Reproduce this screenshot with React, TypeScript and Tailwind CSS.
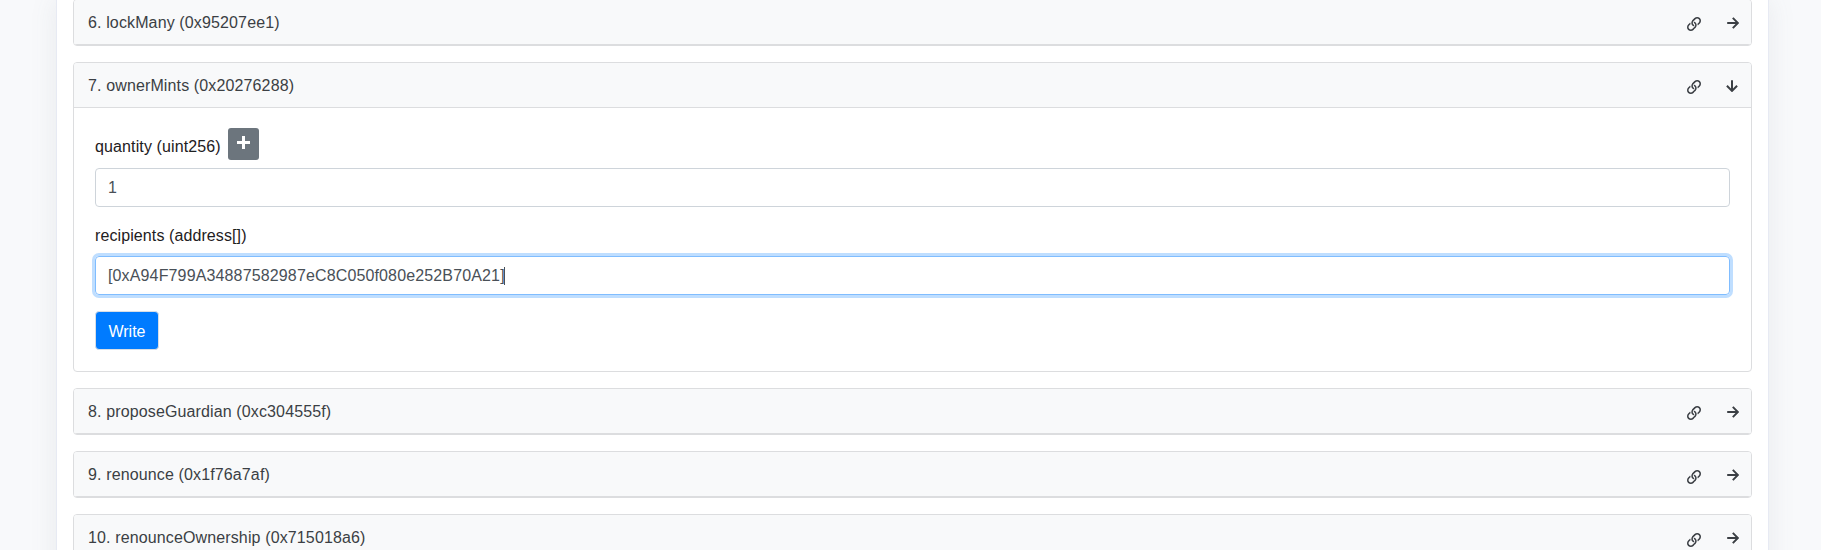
import React from "react";

const LINK_PATH =
  "M314.222 197.78c51.091 51.091 54.377 132.287 9.75 187.16-6.242 7.73-2.784 3.865-84.94 86.02-54.696 54.696-143.266 54.745-197.99 0-54.711-54.69-54.734-143.255 0-197.99 32.773-32.773 51.835-51.899 63.409-63.457 7.463-7.452 20.331-2.354 20.486 8.192a173.31 173.31 0 0 0 4.746 37.828c.966 4.029-.272 8.269-3.202 11.198L80.632 312.57c-32.755 32.775-32.887 85.892 0 118.8 32.775 32.755 85.892 32.887 118.8 0l75.19-75.2c32.718-32.725 32.777-86.013 0-118.79a83.722 83.722 0 0 0-22.814-16.229c-4.623-2.233-7.182-7.25-6.561-12.346 1.356-11.122 6.296-21.885 14.815-30.405l4.375-4.375c3.625-3.626 9.177-4.594 13.76-2.294 12.999 6.524 25.187 15.211 36.025 26.049zM470.958 41.04c-54.724-54.745-143.294-54.696-197.99 0-82.156 82.156-78.698 78.29-84.94 86.02-44.627 54.873-41.341 136.069 9.75 187.16 10.838 10.838 23.026 19.525 36.025 26.049 4.582 2.3 10.134 1.331 13.76-2.294l4.375-4.375c8.52-8.519 13.459-19.283 14.815-30.405.621-5.096-1.938-10.113-6.561-12.346a83.706 83.706 0 0 1-22.814-16.229c-32.777-32.777-32.718-86.065 0-118.79l75.19-75.2c32.908-32.887 86.025-32.755 118.8 0 32.887 32.908 32.755 86.025 0 118.8l-45.848 45.84c-2.93 2.929-4.168 7.169-3.202 11.198a173.31 173.31 0 0 1 4.746 37.828c.155 10.546 13.023 15.644 20.486 8.192 11.574-11.558 30.636-30.684 63.409-63.457 54.733-54.735 54.71-143.3-.001-197.991z";

function LinkIcon({ className }: { className: string }) {
  return (
    <svg viewBox="0 0 512 512" className={`size-3.5 ${className}`} fill="currentColor">
      <path d={LINK_PATH} />
    </svg>
  );
}

function ArrowIcon({ down }: { down?: boolean }) {
  return (
    <svg
      viewBox="0 0 12 12"
      className={down ? "mr-[13px] size-3 rotate-90" : "mr-3 size-3"}
      fill="none"
      stroke="currentColor"
      strokeWidth="2"
    >
      <path d="M0.2 6H11M5.8 0.9L10.9 6L5.8 11.1" />
    </svg>
  );
}

type HeaderProps = { title: string; open?: boolean; low?: boolean };

function Header({ title, open, low }: HeaderProps) {
  return (
    <div className="flex h-[45px] items-center border-b border-[#dcdddf] bg-[#f8f9fa] pt-px pl-3.5 text-[#3b3f44]">
      <span className="grow whitespace-nowrap tracking-[0.13px]">{title}</span>
      <LinkIcon className={`${low ? "mt-1" : "mt-[3px]"} ${open ? "mr-[25px]" : "mr-[26px]"}`} />
      <ArrowIcon down={open} />
    </div>
  );
}

function Card({ children, ...header }: HeaderProps & { children?: React.ReactNode }) {
  return (
    <section
      className={`shrink-0 overflow-hidden rounded border border-[#dcdddf] ${header.open ? "h-[310px]" : "h-[47px]"}`}
    >
      <Header {...header} />
      {children}
    </section>
  );
}

export default function App() {
  return (
    <div className="h-[550px] overflow-hidden bg-[#f8f9fb] pr-[52px] pl-14 font-['Liberation_Sans',Arial,sans-serif] text-base leading-6 text-[#1e2022]">
      <main className="-mt-px flex h-[600px] flex-col gap-4 border-x border-[#e7eaf3] bg-white px-4 shadow-[0_0_26px_rgba(100,105,115,0.1)]">
        <Card title="6. lockMany (0x95207ee1)" />
        <Card title="7. ownerMints (0x20276288)" open>
          <div className="flex flex-col items-start px-[21px] pt-5">
            <div className="flex h-8 items-start">
              <label className="mt-[7px] w-[133px] whitespace-nowrap tracking-[0.12px]">quantity (uint256)</label>
              <button className="flex h-8 w-[31px] items-start justify-center rounded-[3px] bg-[#6c757d] pt-2 text-white">
                <svg viewBox="0 0 13 13" className="size-[13px]" fill="none" stroke="currentColor" strokeWidth="3">
                  <path d="M0 6.5H13M6.5 0V13" />
                </svg>
              </button>
            </div>
            <div className="mt-2 flex h-[39px] w-full items-center rounded border border-[#ced4da] pl-3 text-[#495057]">1</div>
            <label className="mt-[17px] tracking-[0.1px]">recipients (address[])</label>
            <div className="mt-2 flex h-[39px] w-full items-center rounded border border-[#80bdff] pl-3 text-[#495057] shadow-[0_0_0_3px_#bfdeff]">
              <span className="tracking-[0.14px]">[0xA94F799A34887582987eC8C050f080e252B70A21]</span>
              <span className="-ml-px h-[18px] w-px bg-[#495057]" />
            </div>
            <button className="mt-4 h-[39px] w-16 rounded border border-[#d9dee5] bg-[#007bff] pt-0.5 text-white">Write</button>
          </div>
        </Card>
        <Card title="8. proposeGuardian (0xc304555f)" />
        <Card title="9. renounce (0x1f76a7af)" low />
        <Card title="10. renounceOwnership (0x715018a6)" low />
      </main>
    </div>
  );
}
